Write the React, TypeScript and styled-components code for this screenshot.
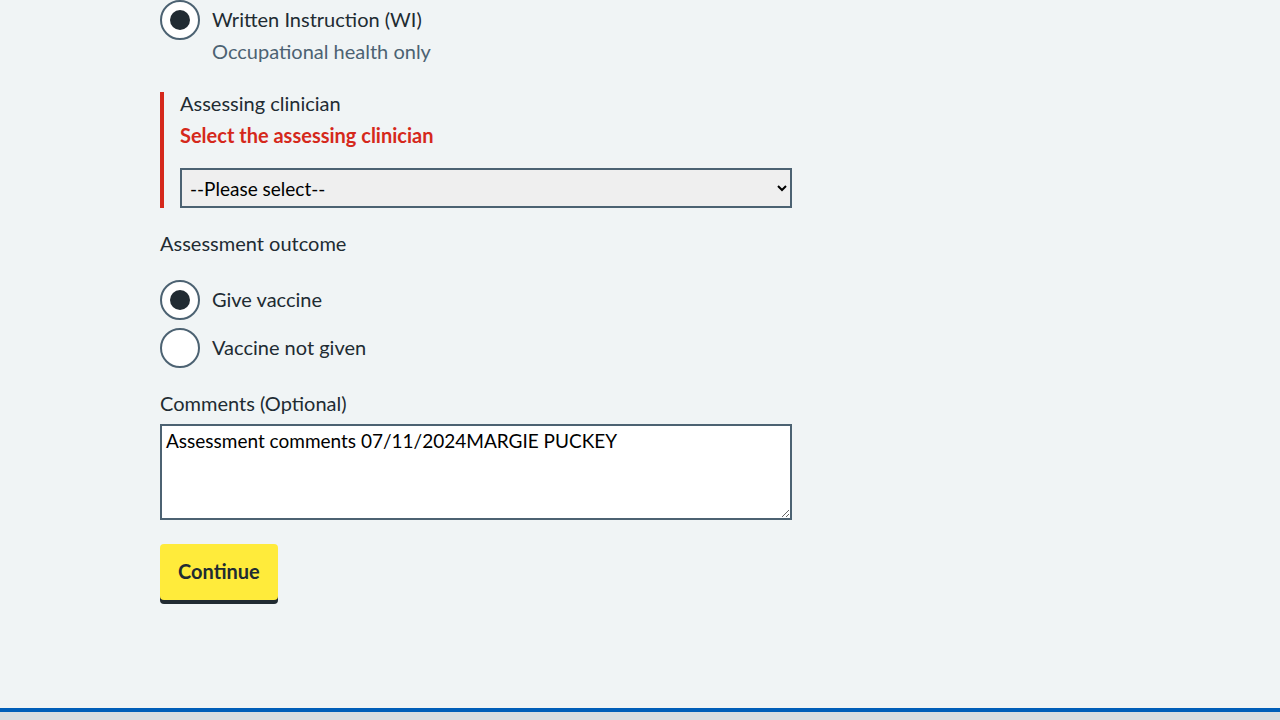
import React from "react";
import styled, { createGlobalStyle } from "styled-components";

const Global = createGlobalStyle`
  html, body { margin: 0; padding: 0; background: #f0f4f5; }
  body { font-family: Lato, "Noto Sans", sans-serif; color: #212b32; }
  * { box-sizing: border-box; }
`;

const Page = styled.div`
  min-height: 720px;
  display: flex;
  flex-direction: column;
`;

const Main = styled.main`
  flex: 1;
  height: 708px;
  padding-left: 160px;
  width: 792px;
  box-sizing: content-box;
`;

const Footer = styled.footer`
  border-top: 4px solid #005eb8;
  background: #d8dde0;
  height: 12px;
`;

const RadioItem = styled.label`
  display: grid;
  grid-template-columns: 40px 1fr;
  column-gap: 12px;
  align-items: start;
  margin-bottom: 8px;
  cursor: pointer;
`;

const Circle = styled.span<{ $checked?: boolean }>`
  width: 40px;
  height: 40px;
  border: 2px solid #4c6272;
  border-radius: 50%;
  background: #fff;
  display: flex;
  align-items: center;
  justify-content: center;
  &::after {
    content: "";
    width: 20px;
    height: 20px;
    border-radius: 50%;
    background: #212b32;
    display: ${(p) => (p.$checked ? "block" : "none")};
  }
`;

const RadioText = styled.span`
  display: flex;
  flex-direction: column;
  padding-top: 5px;
`;

const LabelText = styled.span`
  font-size: 20px;
  line-height: 28px;
  color: #212b32;
`;

const Hint = styled.span`
  font-size: 20px;
  line-height: 28px;
  color: #4c6272;
  margin-top: 4px;
`;

const ErrorGroup = styled.div`
  border-left: 4px solid #d5281b;
  padding-left: 16px;
  margin-top: 27px;
  display: flex;
  flex-direction: column;
`;

const FieldLabel = styled.div`
  font-size: 20px;
  line-height: 24px;
  color: #212b32;
  margin-top: -1px;
`;

const ErrorMessage = styled.div`
  font-size: 20px;
  line-height: 24px;
  font-weight: 700;
  color: #d5281b;
  margin-top: 8px;
  margin-bottom: 21px;
`;

const Select = styled.select`
  width: 612px;
  height: 40px;
  border: 2px solid #4c6272;
  border-radius: 0;
  background: #efefef;
  font-family: inherit;
  font-size: 19px;
  color: #000;
  padding: 0 4px 0 4px;
`;

const Section = styled.div<{ $top: number }>`
  margin-top: ${(p) => p.$top}px;
`;

const Legend = styled.div`
  font-size: 20px;
  line-height: 24px;
  margin-top: -1px;
  margin-bottom: 25px;
`;

const TextArea = styled.textarea`
  display: block;
  width: 632px;
  height: 96px;
  border: 2px solid #4c6272;
  border-radius: 0;
  background: #fff;
  font-family: inherit;
  font-size: 19px;
  line-height: 24px;
  color: #000;
  padding: 3px 4px 4px;
  margin-top: 9px;
  resize: vertical;
`;

const Button = styled.button`
  margin-top: 24px;
  background: #ffeb3b;
  color: #212b32;
  border: none;
  border-radius: 4px;
  box-shadow: 0 4px 0 #212b32;
  font-family: inherit;
  font-weight: 700;
  font-size: 20px;
  line-height: 24px;
  padding: 15px 18px 17px;
  cursor: pointer;
`;

export default function App() {
  return (
    <Page>
      <Global />
      <Main>
        <RadioItem>
          <Circle $checked />
          <RadioText>
            <LabelText>Written Instruction (WI)</LabelText>
            <Hint>Occupational health only</Hint>
          </RadioText>
        </RadioItem>

        <ErrorGroup>
          <FieldLabel>Assessing clinician</FieldLabel>
          <ErrorMessage>Select the assessing clinician</ErrorMessage>
          <Select defaultValue="">
            <option value="">--Please select--</option>
          </Select>
        </ErrorGroup>

        <Section $top={24}>
          <Legend>Assessment outcome</Legend>
          <RadioItem>
            <Circle $checked />
            <RadioText>
              <LabelText>Give vaccine</LabelText>
            </RadioText>
          </RadioItem>
          <RadioItem>
            <Circle />
            <RadioText>
              <LabelText>Vaccine not given</LabelText>
            </RadioText>
          </RadioItem>
        </Section>

        <Section $top={24}>
          <FieldLabel>Comments (Optional)</FieldLabel>
          <TextArea defaultValue="Assessment comments 07/11/2024MARGIE PUCKEY" />
        </Section>

        <Button>Continue</Button>
      </Main>
      <Footer />
    </Page>
  );
}
